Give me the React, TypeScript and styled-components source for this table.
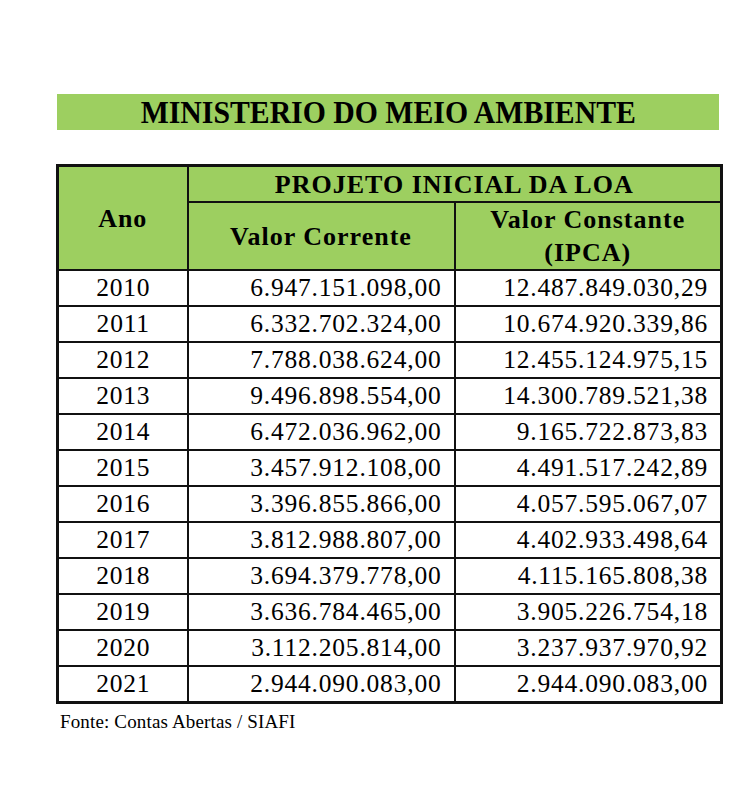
import React from "react";
import styled, { createGlobalStyle } from "styled-components";

const Global = createGlobalStyle`
  html, body { margin: 0; padding: 0; background: #ffffff; color: #000; }
`;

const GREEN = "#9dcf60";

const Page = styled.div`
  width: 750px;
  height: 797px;
  box-sizing: border-box;
  padding: 94px 31px 0 56px;
  display: flex;
  flex-direction: column;
  font-family: "Liberation Serif", serif;
`;

const Banner = styled.div`
  height: 36px;
  background: ${GREEN};
  display: flex;
  align-items: center;
  justify-content: center;
  margin-left: 1px;
`;

const BannerText = styled.span`
  display: inline-block;
  font-family: "Liberation Serif", serif;
  font-weight: bold;
  font-size: 32px;
  line-height: 34px;
  white-space: nowrap;
  transform: scaleX(0.93);
`;

const Table = styled.table`
  margin-top: 34px;
  width: 664px;
  border-collapse: collapse;
  border: 3px solid #111;
  table-layout: fixed;
  font-family: "Liberation Serif", serif;
`;

const Th = styled.th<{ $h?: number }>`
  background: ${GREEN};
  border: 2px solid #111;
  font-family: "Liberation Serif", serif;
  font-weight: bold;
  font-size: 26px;
  letter-spacing: 1px;
  line-height: 33px;
  height: ${(p) => p.$h ?? 33}px;
  padding: 0;
  text-align: center;
  vertical-align: middle;
`;

const Td = styled.td<{ $align?: string }>`
  border: 2px solid #111;
  font-family: "Liberation Serif", serif;
  font-size: 25.5px;
  letter-spacing: 0.8px;
  height: 34px;
  padding: 0 12px 0 13px;
  text-align: ${(p) => p.$align ?? "right"};
  vertical-align: middle;
  line-height: 34px;
  white-space: nowrap;
`;

const Source = styled.div`
  margin-top: 7px;
  margin-left: 4px;
  font-family: "Liberation Serif", serif;
  font-size: 19px;
  letter-spacing: 0.15px;
`;

const rows: [string, string, string][] = [
  ["2010", "6.947.151.098,00", "12.487.849.030,29"],
  ["2011", "6.332.702.324,00", "10.674.920.339,86"],
  ["2012", "7.788.038.624,00", "12.455.124.975,15"],
  ["2013", "9.496.898.554,00", "14.300.789.521,38"],
  ["2014", "6.472.036.962,00", "9.165.722.873,83"],
  ["2015", "3.457.912.108,00", "4.491.517.242,89"],
  ["2016", "3.396.855.866,00", "4.057.595.067,07"],
  ["2017", "3.812.988.807,00", "4.402.933.498,64"],
  ["2018", "3.694.379.778,00", "4.115.165.808,38"],
  ["2019", "3.636.784.465,00", "3.905.226.754,18"],
  ["2020", "3.112.205.814,00", "3.237.937.970,92"],
  ["2021", "2.944.090.083,00", "2.944.090.083,00"],
];

export default function App() {
  return (
    <>
      <Global />
      <Page>
        <Banner>
          <BannerText>MINISTERIO DO MEIO AMBIENTE</BannerText>
        </Banner>
        <Table>
          <colgroup>
            <col style={{ width: 130 }} />
            <col style={{ width: 267 }} />
            <col style={{ width: 267 }} />
          </colgroup>
          <thead>
            <tr>
              <Th rowSpan={2}>Ano</Th>
              <Th colSpan={2} $h={34}>PROJETO INICIAL DA LOA</Th>
            </tr>
            <tr>
              <Th $h={66}>Valor Corrente</Th>
              <Th $h={66}>
                Valor Constante
                <br />
                (IPCA)
              </Th>
            </tr>
          </thead>
          <tbody>
            {rows.map((r) => (
              <tr key={r[0]}>
                <Td $align="center">{r[0]}</Td>
                <Td>{r[1]}</Td>
                <Td>{r[2]}</Td>
              </tr>
            ))}
          </tbody>
        </Table>
        <Source>Fonte: Contas Abertas / SIAFI</Source>
      </Page>
    </>
  );
}
